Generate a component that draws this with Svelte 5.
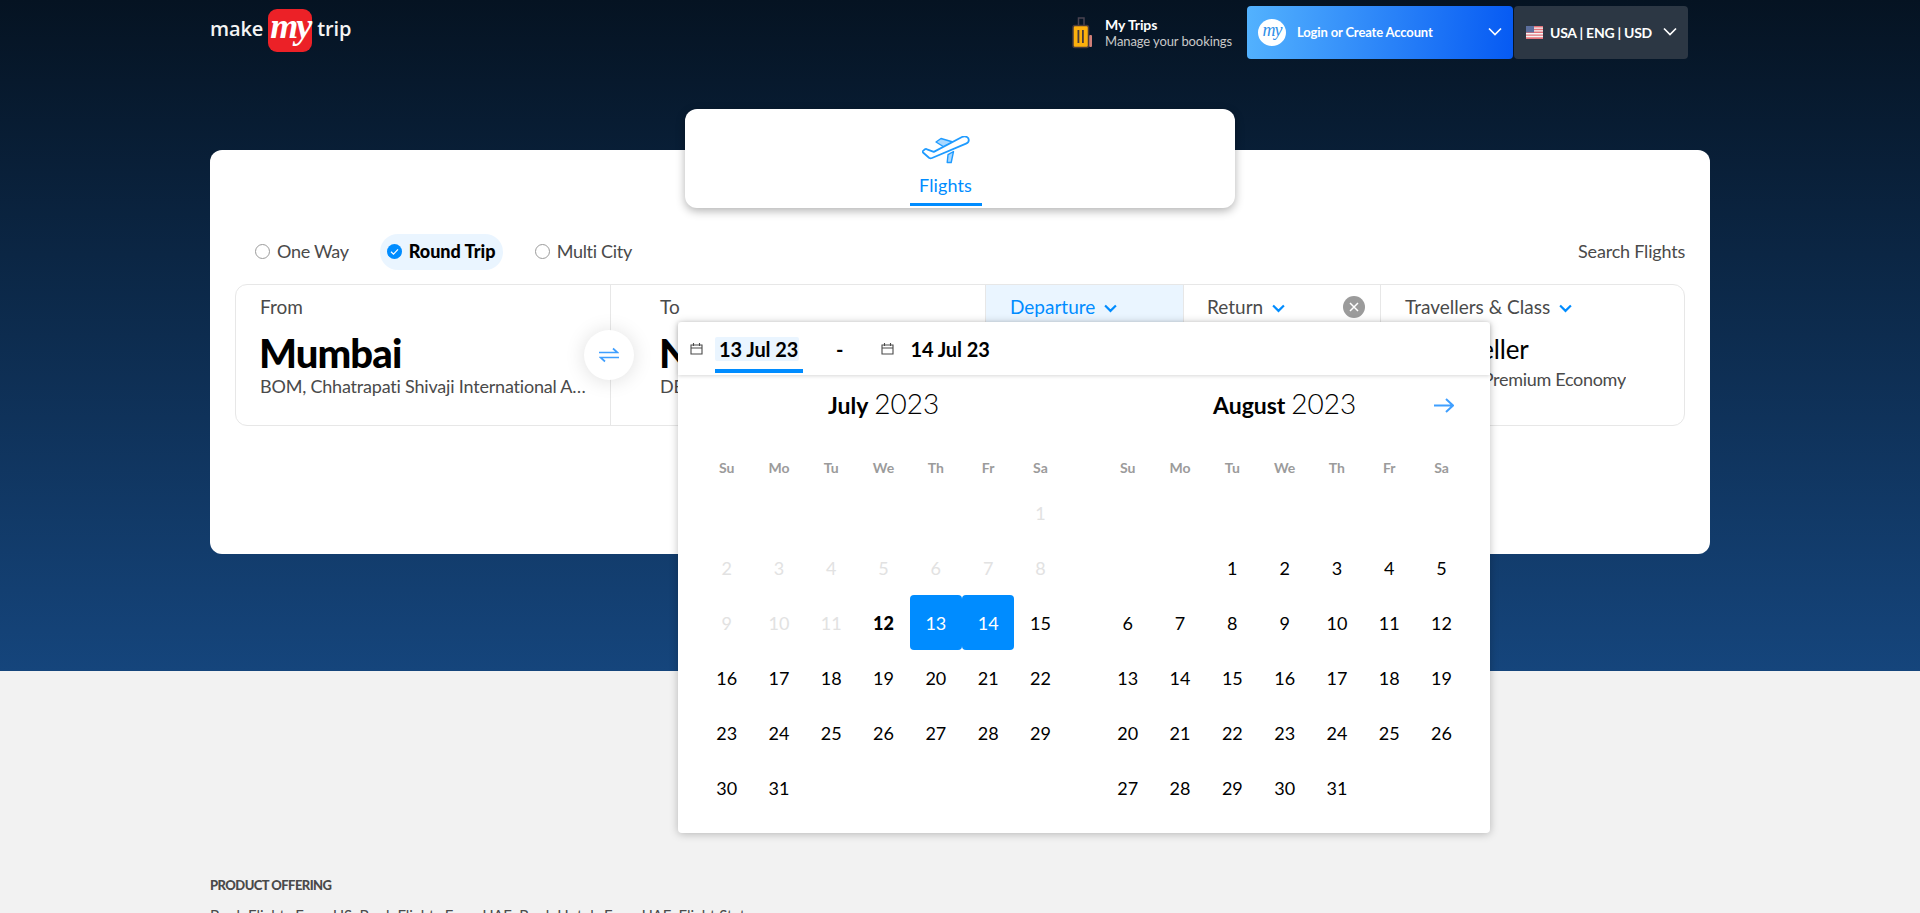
<script>
  const weekdays = ['Su', 'Mo', 'Tu', 'We', 'Th', 'Fr', 'Sa'];
  const range = (a, b) => Array.from({ length: b - a + 1 }, (_, i) => a + i);
  const july = [...Array(6).fill(null), ...range(1, 31)];
  const august = [...Array(9).fill(null), ...range(1, 31)];
  const months = [
    { name: 'July', days: july, past: 11 },
    { name: 'August', days: august, past: 0 }
  ];
  function dayClass(month, d) {
    if (month.name !== 'July') return '';
    if (d <= month.past) return 'past';
    if (d === 12) return 'today';
    if (d === 13) return 'sel start';
    if (d === 14) return 'sel end';
    return '';
  }
</script>

<div class="page">
  <section class="hero">
    <header class="topbar">
      <div class="logo">
        <span class="logo-word">make</span>
        <span class="logo-badge">my</span>
        <span class="logo-word">trip</span>
      </div>
      <div class="nav">
        <div class="trips">
          <svg class="bag" viewBox="0 0 20 32" width="20" height="32" aria-hidden="true">
            <path d="M6.500 8V1h5.500v7" fill="none" stroke="#4a4350" stroke-width="1.500" />
            <rect x="1" y="8.500" width="15.500" height="22" rx="2" fill="#fdb00d" stroke="#4a3a3a" stroke-width="1.500" />
            <rect x="5.500" y="13" width="1.800" height="13" fill="#4a3a3a" />
            <rect x="10" y="13" width="1.800" height="13" fill="#4a3a3a" />
            <rect x="17.200" y="18" width="2.800" height="12" rx="1" fill="#d07f78" />
          </svg>
          <div class="trips-text">
            <strong>My Trips</strong>
            <span>Manage your bookings</span>
          </div>
        </div>
        <div class="login">
          <span class="login-mark">my</span>
          <span class="login-text">Login or Create Account</span>
          <svg class="nav-chev" viewBox="0 0 14 9" width="14" height="9" aria-hidden="true"><path d="M1 1.500l6 6 6-6" fill="none" stroke="#fff" stroke-width="1.700" /></svg>
        </div>
        <div class="locale">
          <svg class="flag" viewBox="0 0 17 13" width="17" height="13" aria-hidden="true">
            <rect width="17" height="13" fill="#f4f4f4" />
            <path d="M0 0h17v1.400H0zM0 2.800h17v1.400H0zM0 5.600h17V7H0zM0 8.400h17v1.400H0zM0 11.200h17v1.800H0z" fill="#e2727a" />
            <rect width="8" height="6.400" fill="#5c6f9e" />
          </svg>
          <span class="locale-text">USA | ENG | USD</span>
          <svg class="nav-chev" viewBox="0 0 14 9" width="14" height="9" aria-hidden="true"><path d="M1 1.500l6 6 6-6" fill="none" stroke="#fff" stroke-width="1.700" /></svg>
        </div>
      </div>
    </header>

    <main class="card">
      <div class="tab">
        <svg class="plane" viewBox="0 0 48 28" width="48" height="28" aria-hidden="true">
          <path d="M14 6l5-3.500 12 3.500-9 5zM31.500 15.500l-2.300 11h-4l.8-7.800z" fill="#a9d8ff" stroke="#1f9bff" stroke-width="1.400" stroke-linejoin="round" />
          <path d="M40 1c4-1.500 6.800.5 6.800 3 0 1.700-1 3-2.800 3.700L10 22c-1.200.5-2.200.3-3-.3L1.300 16.800c-.9-.8-.8-1.600 0-2.200L3 13.300c.7-.5 1.300-.5 2 0l6.800 2.600z" fill="#fff" stroke="#1f9bff" stroke-width="1.800" stroke-linejoin="round" />
        </svg>
        <span class="tab-label">Flights</span>
      </div>

      <div class="options">
        <div class="trip-types">
          <span class="trip"><i class="radio"></i>One Way</span>
          <span class="trip active">
            <svg class="radio-on" viewBox="0 0 15 15" width="15" height="15" aria-hidden="true">
              <circle cx="7.500" cy="7.500" r="7.500" fill="#008cff" />
              <path d="M4 7.700l2.500 2.400L11 5.300" fill="none" stroke="#fff" stroke-width="1.200" />
            </svg>
            Round Trip
          </span>
          <span class="trip"><i class="radio"></i>Multi City</span>
        </div>
        <span class="search-label">Search Flights</span>
      </div>

      <div class="widget">
        <div class="field from">
          <span class="label">From</span>
          <span class="big">Mumbai</span>
          <span class="sub">BOM, Chhatrapati Shivaji International Airport India</span>
          <span class="swap">
            <svg viewBox="0 0 20 16" width="20" height="16" aria-hidden="true">
              <path d="M0 5.500h18.500L14 1.500M20 10.500H1.500L6 14.500" fill="none" stroke="#3f9fff" stroke-width="1.700" />
            </svg>
          </span>
        </div>
        <div class="field to">
          <span class="label">To</span>
          <span class="big">New Delhi</span>
          <span class="sub">DEL, Delhi Airport India</span>
        </div>
        <div class="field date departure">
          <span class="label">Departure
            <svg class="chev" viewBox="0 0 12 8" width="13" height="9" aria-hidden="true"><path d="M1 1.200l5 5 5-5" fill="none" stroke="#008cff" stroke-width="2" /></svg>
          </span>
        </div>
        <div class="field date return">
          <span class="label">Return
            <svg class="chev" viewBox="0 0 12 8" width="13" height="9" aria-hidden="true"><path d="M1 1.200l5 5 5-5" fill="none" stroke="#008cff" stroke-width="2" /></svg>
          </span>
          <span class="clear">
            <svg viewBox="0 0 10 10" width="10" height="10" aria-hidden="true"><path d="M1 1l8 8M9 1l-8 8" stroke="#fff" stroke-width="1.500" /></svg>
          </span>
        </div>
        <div class="field travellers">
          <span class="label">Travellers &amp; Class
            <svg class="chev" viewBox="0 0 12 8" width="13" height="9" aria-hidden="true"><path d="M1 1.200l5 5 5-5" fill="none" stroke="#008cff" stroke-width="2" /></svg>
          </span>
          <span class="count"><b>1</b> Traveller</span>
          <span class="sub cabin">Economy/Premium Economy</span>
        </div>
      </div>

      <div class="calendar">
        <div class="cal-head">
          <svg class="cal-icon" viewBox="0 0 13 13" width="13" height="13" aria-hidden="true">
            <path d="M1 3h11v9H1zM1 6h11M3.500 1v3M9.500 1v3" fill="none" stroke="#4a4a4a" stroke-width="1.100" />
          </svg>
          <span class="cal-date active-date"><span class="chip">13 Jul 23</span></span>
          <span class="dash">-</span>
          <svg class="cal-icon second" viewBox="0 0 13 13" width="13" height="13" aria-hidden="true">
            <path d="M1 3h11v9H1zM1 6h11M3.500 1v3M9.500 1v3" fill="none" stroke="#4a4a4a" stroke-width="1.100" />
          </svg>
          <span class="cal-date end-date">14 Jul 23</span>
        </div>
        <div class="months">
          {#each months as month}
            <div class="month">
              <div class="caption"><b>{month.name}</b> <span>2023</span></div>
              <div class="days weekdays">
                {#each weekdays as w}<span class="wd">{w}</span>{/each}
              </div>
              <div class="days">
                {#each month.days as d}
                  {#if d === null}
                    <span class="day"></span>
                  {:else}
                    <span class="day {dayClass(month, d)}">{d}</span>
                  {/if}
                {/each}
              </div>
            </div>
          {/each}
        </div>
        <svg class="next" viewBox="0 0 20 15" width="20" height="15" aria-hidden="true">
          <path d="M0 7.500h18.500M12 1l7 6.500-7 6.500" fill="none" stroke="#3f9fff" stroke-width="2" />
        </svg>
      </div>
    </main>
  </section>

  <footer class="footer">
    <h4>PRODUCT OFFERING</h4>
    <p>Book Flights From US, Book Flights From UAE, Book Hotels From UAE, Flight Status</p>
  </footer>
</div>

<style>
  :global(body) {
    margin: 0;
    background: #f2f2f2;
  }
  .page {
    height: 913px;
    overflow: hidden;
    font-family: Lato, "Open Sans", sans-serif;
    color: #000;
  }
  .hero {
    height: 671px;
    background: linear-gradient(to bottom, #051322, #15457c);
    padding: 0 210px;
    box-sizing: border-box;
  }
  .topbar {
    height: 59px;
    padding-top: 6px;
    padding-right: 22px;
    display: flex;
    justify-content: space-between;
    align-items: flex-start;
  }
  .logo {
    display: flex;
    align-items: center;
    gap: 5px;
    height: 43px;
    margin-top: 3px;
  }
  .logo-word {
    font-family: "Open Sans", sans-serif;
    font-weight: 600;
    font-size: 20px;
    color: #f4f4f4;
    letter-spacing: -.1px;
    position: relative;
    top: -2px;
  }
  .logo-badge {
    width: 44px;
    height: 43px;
    border-radius: 9px;
    background: #ec2127;
    color: #fff;
    font-family: "Liberation Serif", serif;
    font-style: italic;
    font-weight: 700;
    font-size: 36px;
    line-height: 34px;
    text-align: center;
    letter-spacing: -2px;
  }
  .nav {
    display: flex;
    align-items: center;
    height: 53px;
  }
  .trips {
    display: flex;
    align-items: center;
    gap: 13px;
    margin-right: 15px;
  }
  .trips-text {
    display: flex;
    flex-direction: column;
    font-size: 13px;
    line-height: 17px;
    color: #c9c9c9;
    letter-spacing: -.1px;
  }
  .trips-text strong {
    color: #fff;
    font-size: 14px;
    font-weight: 700;
  }
  .login {
    width: 266px;
    height: 53px;
    border-radius: 4px;
    background: linear-gradient(93deg, #53b2fe, #065af3);
    display: flex;
    align-items: center;
    padding: 0 11px;
    box-sizing: border-box;
    color: #fff;
  }
  .login-mark {
    width: 28px;
    height: 27px;
    border-radius: 50%;
    background: #fff;
    color: #2f8fe8;
    font-family: "Liberation Serif", serif;
    font-style: italic;
    font-size: 18px;
    line-height: 22px;
    text-align: center;
    letter-spacing: -1px;
  }
  .login-text {
    margin-left: 11px;
    padding-bottom: 2px;
    font-size: 13px;
    font-weight: 700;
    letter-spacing: -.14px;
  }
  .login .nav-chev {
    margin-left: auto;
  }
  .nav-chev {
    margin-bottom: 2px;
  }
  .locale {
    width: 174px;
    height: 53px;
    margin-left: 1px;
    border-radius: 4px;
    background: #2c3744;
    display: flex;
    align-items: center;
    padding: 0 11px 0 12px;
    box-sizing: border-box;
    color: #fff;
  }
  .flag {
    flex: none;
  }
  .locale-text {
    margin-left: 7px;
    font-size: 14px;
    font-weight: 700;
    white-space: nowrap;
    letter-spacing: -.25px;
  }
  .locale .nav-chev {
    margin-left: auto;
  }
  .card {
    position: relative;
    margin-top: 85px;
    height: 404px;
    border-radius: 12px;
    background: #fff;
    padding: 84px 25px 0;
    box-sizing: border-box;
  }
  .tab {
    position: absolute;
    left: 475px;
    top: -41px;
    width: 550px;
    height: 99px;
    border-radius: 12px;
    background: #fff;
    box-shadow: 0 3px 10px rgba(0, 0, 0, .3);
    display: flex;
    flex-direction: column;
    align-items: center;
  }
  .plane {
    margin-top: 27px;
    margin-left: -29px;
  }
  .tab-label {
    margin-top: 8px;
    margin-left: -29px;
    width: 72px;
    height: 34px;
    box-sizing: border-box;
    border-bottom: 3px solid #008cff;
    text-align: center;
    color: #008cff;
    font-size: 18px;
    line-height: 26px;
    letter-spacing: .1px;
  }
  .options {
    display: flex;
    justify-content: space-between;
    align-items: center;
    height: 36px;
    margin-bottom: 14px;
  }
  .trip-types {
    display: flex;
    align-items: center;
  }
  .trip {
    display: flex;
    align-items: center;
    gap: 7px;
    height: 36px;
    font-size: 18px;
    color: #4a4a4a;
    padding: 0 7px 2px;
    box-sizing: border-box;
    letter-spacing: -.3px;
  }
  .trip:first-child {
    margin-left: 13px;
    margin-right: 24px;
  }
  .trip:last-child {
    margin-left: 25px;
  }
  .trip.active {
    background: #eaf5ff;
    border-radius: 18px;
    color: #000;
    font-weight: 900;
    letter-spacing: 0;
    width: 123px;
    white-space: nowrap;
  }
  .radio {
    width: 13px;
    height: 13px;
    border: 1px solid #9b9b9b;
    border-radius: 50%;
    flex: none;
  }
  .search-label {
    font-size: 18px;
    color: #4a4a4a;
    letter-spacing: -.2px;
    padding-bottom: 2px;
  }
  .widget {
    display: grid;
    grid-template-columns: 375px 375px 198px 197px 1fr;
    height: 142px;
    border: 1px solid #e7e7e7;
    border-radius: 12px;
    box-sizing: border-box;
  }
  .field {
    position: relative;
    display: flex;
    flex-direction: column;
    align-items: flex-start;
    padding: 10px 24px 0;
    border-right: 1px solid #e7e7e7;
    box-sizing: border-box;
    min-width: 0;
  }
  .field:last-child {
    border-right: 0;
  }
  .to {
    padding-left: 49px;
  }
  .return {
    padding-left: 23px;
  }
  .label {
    font-size: 19px;
    line-height: 24px;
    color: #4a4a4a;
    white-space: nowrap;
  }
  .big {
    margin: 14px 0 0 -1px;
    font-size: 40px;
    line-height: 40px;
    font-weight: 900;
    letter-spacing: -.9px;
    white-space: nowrap;
  }
  .sub {
    margin-top: 1px;
    font-size: 18px;
    line-height: 24px;
    color: #4a4a4a;
    white-space: nowrap;
    overflow: hidden;
    text-overflow: ellipsis;
    max-width: 326px;
    letter-spacing: -.2px;
  }
  .swap {
    position: absolute;
    right: -24px;
    top: 45px;
    width: 50px;
    height: 50px;
    border-radius: 50%;
    background: #fff;
    box-shadow: 0 1px 20px rgba(0, 0, 0, .13);
    display: flex;
    align-items: center;
    justify-content: center;
    z-index: 1;
  }
  .departure {
    background: #eaf5ff;
  }
  .departure .label {
    color: #008cff;
  }
  .chev {
    margin-left: 4px;
    vertical-align: 1px;
  }
  .clear {
    position: absolute;
    right: 15px;
    top: 11px;
    width: 22px;
    height: 22px;
    border-radius: 50%;
    background: #9b9b9b;
    display: flex;
    align-items: center;
    justify-content: center;
  }
  .count {
    margin-top: 8px;
    font-size: 26px;
    line-height: 34px;
    white-space: nowrap;
    letter-spacing: -.2px;
  }
  .count b {
    font-size: 40px;
    font-weight: 900;
  }
  .cabin {
    margin-top: 1px;
    max-width: none;
    letter-spacing: -.3px;
  }
  .calendar {
    position: absolute;
    left: 468px;
    top: 172px;
    width: 812px;
    height: 511px;
    background: #fff;
    border-radius: 4px;
    box-shadow: 0 1px 8px rgba(0, 0, 0, .25);
    z-index: 2;
  }
  .cal-head {
    height: 53px;
    display: flex;
    align-items: center;
    padding-left: 12px;
    box-shadow: 0 1px 4px rgba(0, 0, 0, .16);
    box-sizing: border-box;
    font-size: 20px;
    font-weight: 700;
  }
  .cal-date {
    margin-left: 12px;
    line-height: 24px;
    letter-spacing: -.1px;
  }
  .active-date {
    width: 88px;
    height: 40px;
    box-sizing: border-box;
    border-bottom: 4px solid #008cff;
    position: relative;
    top: 4px;
    padding-top: 4px;
  }
  .chip {
    display: block;
    width: 84px;
    height: 24px;
    background: #eaf5ff;
    border-radius: 2px;
    padding-left: 4px;
    box-sizing: border-box;
    line-height: 24px;
    white-space: nowrap;
  }
  .dash {
    margin-left: 33px;
  }
  .second {
    margin-left: 38px;
  }
  .end-date {
    margin-left: 16px;
  }
  .months {
    display: flex;
    gap: 35px;
    padding-left: 22.500px;
  }
  .month {
    width: 366.100px;
  }
  .caption {
    margin-top: 12px;
    text-align: center;
    font-size: 23px;
    line-height: 32px;
    white-space: nowrap;
  }
  .caption b {
    font-weight: 700;
  }
  .caption span {
    font-size: 28px;
    font-weight: 300;
    color: #000;
  }
  .days {
    display: grid;
    grid-template-columns: repeat(7, 1fr);
    grid-auto-rows: 55px;
  }
  .weekdays {
    margin-top: 37px;
    grid-auto-rows: 20px;
    margin-bottom: 7px;
  }
  .wd {
    text-align: center;
    font-size: 14px;
    line-height: 20px;
    font-weight: 700;
    color: #9b9b9b;
  }
  .day {
    display: flex;
    align-items: center;
    justify-content: center;
    font-size: 18px;
    color: #000;
  }
  .day.past {
    color: #e2e2e2;
  }
  .day.today {
    font-weight: 900;
  }
  .day.sel {
    background: #008cff;
    color: #fff;
    border-radius: 4px;
  }
  .next {
    position: absolute;
    right: 36px;
    top: 76px;
  }
  .footer {
    padding: 206px 210px 0;
    color: #4a4a4a;
    margin-top: -1px;
  }
  .footer h4 {
    margin: 0;
    font-size: 13px;
    line-height: 18px;
    font-weight: 900;
    letter-spacing: -.55px;
  }
  .footer p {
    margin: 12px 0 0;
    font-size: 15px;
    line-height: 18px;
  }
</style>
